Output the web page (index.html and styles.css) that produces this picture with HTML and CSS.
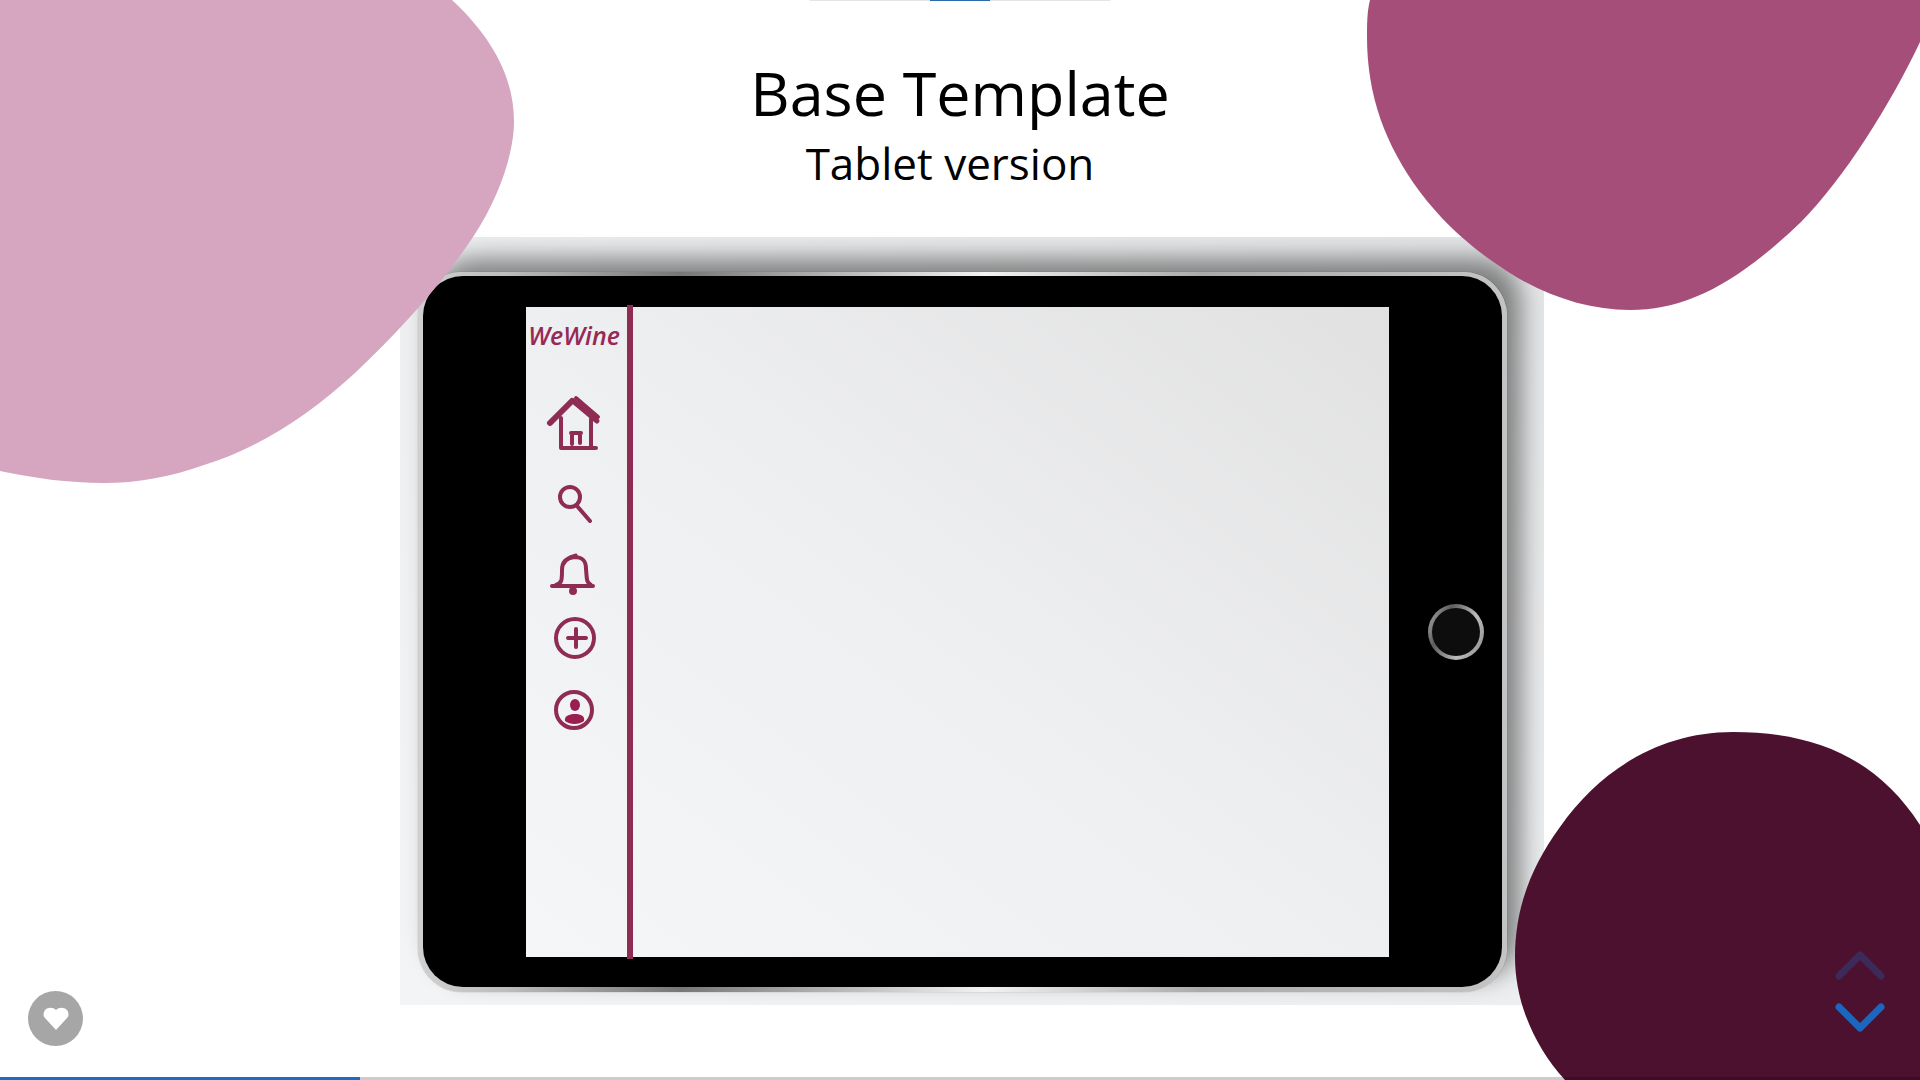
FILE: index.html
```html
<!DOCTYPE html>
<html lang="en">
<head>
<meta charset="utf-8">
<title>Base Template</title>
<meta name="viewport" content="width=device-width, initial-scale=1">
<link rel="stylesheet" href="styles.css">
</head>
<body>
<main class="slide">
  <div class="steps"><div class="steps-current"></div></div>
  <header class="heading">
    <h1 class="title">Base Template</h1>
    <p class="subtitle">Tablet version</p>
  </header>

  <section class="mockup">
    <div class="rim">
      <div class="tablet">
        <div class="screen">
          <nav class="sidebar" aria-label="App">
            <a class="logo" href="#">WeWine</a>
            <button class="tool tall" aria-label="Home">
              <svg width="56" height="56" viewBox="0 0 56 56" fill="none" stroke-linecap="round" stroke-linejoin="round">
                <path stroke-width="6" d="M4 28L26 6"/>
                <path stroke-width="5" d="M27 6L51 26"/>
                <path stroke-width="4" d="M30 3L52 22M15 23V53H50M45 24V52"/>
                <path stroke-width="4" d="M26 49V38H34V48M25 38H35"/>
              </svg>
            </button>
            <button class="tool tall" aria-label="Search">
              <svg width="56" height="40" viewBox="0 0 56 40" fill="none" stroke-linecap="round">
                <ellipse cx="24" cy="14" rx="10" ry="10" stroke-width="4"/>
                <path stroke-width="4" d="M31 23L44 38"/>
              </svg>
            </button>
            <button class="tool" aria-label="Notifications">
              <svg width="56" height="44" viewBox="0 0 56 44" fill="none" stroke-linecap="round" stroke-linejoin="round">
                <path stroke-width="4" d="M10 32C16 30 16 27 16 17C16 9 20 5 28 4C37 4 40 8 40 16C41 26 40 29 45 32"/>
                <path stroke-width="4" d="M6 33H47"/>
                <path stroke-width="3" d="M24 4L30 2"/>
                <circle cx="27" cy="38" r="2" stroke-width="4"/>
              </svg>
            </button>
            <button class="tool" aria-label="Add">
              <svg width="56" height="44" viewBox="0 0 56 44" fill="none" stroke-linecap="round">
                <circle cx="29" cy="21" r="19" stroke-width="4"/>
                <path stroke-width="4" d="M22 21H40M30 12V30"/>
              </svg>
            </button>
            <button class="tool tall" aria-label="Profile">
              <svg width="56" height="44" viewBox="0 0 56 44" fill="none">
                <circle cx="28" cy="21" r="18" stroke-width="4"/>
                <ellipse class="solid" cx="29" cy="16" rx="5" ry="6"/>
                <path class="solid" d="M19 32C18 27 23 25 29 25C35 25 39 27 38 32C33 36 24 36 19 32Z"/>
              </svg>
            </button>
          </nav>
        </div>
        <div class="chin"><button class="home-button" aria-label="Tablet home"></button></div>
      </div>
    </div>
  </section>

  <svg class="blob blob-pink" width="520" height="490" viewBox="0 0 520 490" aria-hidden="true"><path d="M0 0H452C495 40 514 80 514 122C514 150 501 195 473 237C440 287 400 330 355 373C310 414 262 447 204 465C170 477 137 483 104 483C68 483 33 478 0 471Z"/></svg>
  <svg class="blob blob-plum" width="560" height="320" viewBox="0 0 560 320" aria-hidden="true"><path d="M10 0C7 12 7 24 7 37C7 95 25 145 60 192C88 229 120 255 158 278C195 299 232 310 270 310C325 310 375 285 441 222C485 177 530 105 560 42V0Z"/></svg>
  <svg class="blob blob-wine" width="420" height="380" viewBox="0 0 420 380" aria-hidden="true"><path d="M65 380C33 345 15 300 15 257C15 210 30 168 60 127C100 70 160 32 233 32C310 32 375 55 420 125V380Z"/></svg>

  <button class="like" aria-label="Like">
    <svg width="26" height="23" viewBox="0 0 26 23" aria-hidden="true"><path fill="#fff" d="M13 3C16 0 21 0 24 3C26 6 26 9 24 11L13 23L2 11C0 9 0 6 2 3C5 0 10 0 13 3Z"/></svg>
  </button>
  <div class="pager">
    <button class="arrow" aria-label="Previous" disabled>
      <svg width="50" height="29" viewBox="0 0 50 29" aria-hidden="true"><path d="M4 25L25 4L46 25"/></svg>
    </button>
    <button class="arrow" aria-label="Next">
      <svg width="50" height="29" viewBox="0 0 50 29" aria-hidden="true"><path d="M4 4L25 25L46 4"/></svg>
    </button>
  </div>
  <div class="progress"><div class="progress-done"></div></div>
</main>
</body>
</html>
```
FILE: styles.css
```css
* { box-sizing: border-box; }

body {
  margin: 0;
  background: #fff;
  color: #000;
  font-family: "Open Sans", sans-serif;
}

button {
  margin: 0;
  padding: 0;
  border: 0;
  background: none;
  cursor: pointer;
}

svg { display: block; }

.slide {
  position: relative;
  display: flex;
  flex-direction: column;
  align-items: center;
  min-height: 100vh;
  padding-bottom: 75px;
  overflow: hidden;
}

.steps {
  display: flex;
  justify-content: center;
  width: 300px;
  height: 1px;
  background: #e4e4e4;
}

.steps-current {
  width: 60px;
  background: #2a6cab;
}

.heading {
  height: 236px;
  padding-top: 48px;
  text-align: center;
}

.title {
  margin: 0;
  font-size: 61px;
  font-weight: 400;
  line-height: 88px;
}

.subtitle {
  margin: 0;
  padding-right: 20px;
  font-size: 44px;
  line-height: 52px;
}

.mockup {
  flex: 1;
  display: flex;
  width: calc(100% - 776px);
  min-width: 640px;
  margin-left: 24px;
  padding: 35px 37px 13px 18px;
  overflow: hidden;
  background: linear-gradient(to top right, #f2f4f6, #eceeef 50%, #e4e5e6);
}

.rim {
  flex: 1;
  display: flex;
  padding: 4px 5px 5px;
  border-radius: 44px;
  background: linear-gradient(to right, #d0d0d0, #bdbdbd 8%, #777 24%, #f2f2f2 52%, #aaa 72%, #c4c4c4);
  box-shadow: 14px -14px 24px rgba(0, 0, 0, .45), 0 0 1px #777;
}

.tablet {
  flex: 1;
  display: flex;
  padding: 31px 0 30px 103px;
  border-radius: 40px;
  background: #000;
}

.screen {
  flex: 1;
  display: flex;
  background: linear-gradient(to top right, #f4f6f8, #eeeff1 50%, #e1e1e1);
}

.sidebar {
  display: flex;
  flex-direction: column;
  align-items: center;
  width: 107px;
  margin: -2px 0;
  padding-right: 5px;
  border-right: 6px solid #8f2c53;
}

.logo {
  height: 78px;
  color: #962a56;
  font-size: 25px;
  font-style: italic;
  font-weight: 600;
  line-height: 60px;
  text-decoration: none;
}

.tool {
  display: grid;
  place-items: center;
  width: 56px;
  height: 64px;
  stroke: #8f2c53;
}

.tall { height: 80px; }

.solid {
  fill: #9a1f50;
  stroke: none;
}

.chin {
  display: grid;
  place-items: center;
  width: 113px;
  padding-left: 20px;
}

.home-button {
  width: 56px;
  height: 56px;
  border: 4px solid transparent;
  border-radius: 50%;
  background:
    linear-gradient(#0d0d0d, #0d0d0d) padding-box,
    linear-gradient(115deg, #b5b5b5, #5c5c5c 30%, #bcbcbc 65%, #8a8a8a) border-box;
}

.blob {
  position: absolute;
  pointer-events: none;
}

.blob-pink {
  top: 0;
  left: 0;
  fill: #d6a6c0;
}

.blob-plum {
  top: 0;
  right: 0;
  fill: #a54e79;
}

.blob-wine {
  right: 0;
  bottom: 0;
  fill: #4b112f;
}

.like {
  position: absolute;
  bottom: 34px;
  left: 28px;
  display: grid;
  place-items: center;
  width: 55px;
  height: 55px;
  border-radius: 50%;
  background: #a6a6a6;
}

.pager {
  position: absolute;
  right: 35px;
  bottom: 48px;
  display: grid;
  gap: 23px;
}

.arrow path {
  fill: none;
  stroke: #1b67bf;
  stroke-width: 7;
  stroke-linecap: round;
  stroke-linejoin: round;
}

.arrow:disabled { opacity: .3; }

.progress {
  position: absolute;
  right: 0;
  bottom: 0;
  left: 0;
  height: 3px;
  background: rgba(0, 0, 0, .2);
}

.progress-done {
  width: 360px;
  height: 100%;
  background: #1f6bbd;
}
```
